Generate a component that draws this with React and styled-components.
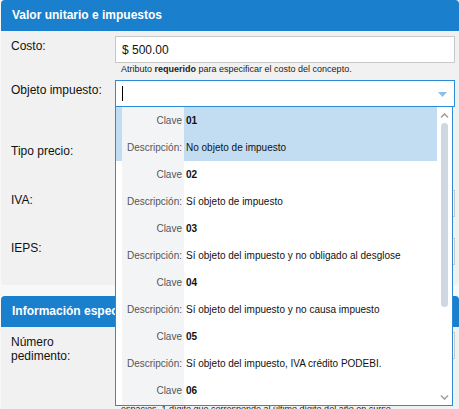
import React from 'react';
import styled, { createGlobalStyle } from 'styled-components';

const GlobalStyle = createGlobalStyle`
  html, body { margin: 0; padding: 0; background: #f8f8f8; }
  body {
    font-family: "Liberation Sans", Arial, sans-serif;
    width: 459px;
    height: 409px;
    overflow: hidden;
  }
  * { box-sizing: border-box; }
`;

const Page = styled.div`
  padding-left: 1px;
  display: flex;
  flex-direction: column;
  gap: 11px;
`;

const Panel = styled.section`
  background: #f1f1f1;
  border-radius: 4px;
`;

const PanelHeader = styled.h2`
  margin: 0;
  height: 31px;
  line-height: 31px;
  padding-left: 11px;
  background: #1a7fcc;
  color: #fff;
  font-size: 12px;
  font-weight: bold;
  border-radius: 4px 4px 0 0;
  white-space: nowrap;
`;

const PanelBody = styled.div`
  padding: 5px 4px ${(p) => p.$pb}px 10px;
  display: flex;
  flex-direction: column;
`;

const Field = styled.div`
  display: grid;
  grid-template-columns: 104px 1fr;
  margin-bottom: ${(p) => p.$mb || 0}px;
`;

const Label = styled.label`
  font-size: 12px;
  line-height: 14px;
  color: #111;
  padding: 3px 10px 0 0;
`;

const Control = styled.div`
  position: relative;
  min-width: 0;
`;

const Input = styled.div`
  height: 27px;
  border: 1px solid ${(p) => (p.$focused ? '#2a8bd8' : '#c8c8c8')};
  background: #fff;
  display: flex;
  align-items: center;
  padding: 0 6px;
  font-size: 12px;
  color: #111;
  position: relative;
`;

const Caret = styled.span`
  display: block;
  width: 1px;
  height: 15px;
  background: #000;
`;

const Arrow = styled.svg`
  position: absolute;
  right: 7px;
  top: 11px;
`;

const Help = styled.div`
  font-size: 9px;
  line-height: 11px;
  color: #1a1a1a;
  padding: 1px 0 1px 6px;
`;

const Radios = styled.div`
  display: flex;
  flex-direction: column;
  gap: 6px;
  padding: 3px 0 0 6px;
  height: 40px;
  font-size: 12px;
  color: #111;
`;

const RadioOpt = styled.span`
  display: flex;
  align-items: center;
  gap: 5px;
`;

const RadioDot = styled.span`
  width: 12px;
  height: 12px;
  border-radius: 50%;
  border: 1px solid #888;
  background: #fff;
`;

const Dropdown = styled.div`
  position: absolute;
  top: 26px;
  left: 0;
  width: 338px;
  height: 300px;
  background: #fff;
  border: 1px solid #2a8bd8;
  z-index: 10;
  display: flex;
  overflow: hidden;
`;

const List = styled.div`
  flex: 1;
  overflow: hidden;
`;

const Item = styled.div`
  display: grid;
  grid-template-columns: 62px 1fr;
  padding-left: 6px;
  background: ${(p) => (p.$selected ? '#c2ddf1' : '#fff')};
`;

const Key = styled.div`
  background: #f3f4f6;
  text-align: right;
  padding-right: 2px;
  font-size: 10px;
  color: #555;
  height: 27px;
  line-height: 27px;
  white-space: nowrap;
`;

const Val = styled.div`
  padding-left: 2px;
  font-size: 10px;
  font-weight: ${(p) => (p.$bold ? 'bold' : 'normal')};
  color: #111;
  height: 27px;
  line-height: 27px;
  white-space: nowrap;
`;

const ScrollTrack = styled.div`
  width: 15px;
  display: flex;
  flex-direction: column;
  align-items: center;
  padding: 5px 0 4px;
`;

const Thumb = styled.div`
  width: 7px;
  height: 184px;
  margin-top: 4px;
  border-radius: 4px;
  background: #cfd8e1;
`;

const Spacer = styled.div`
  flex: 1;
`;

const Chevron = ({ up }) => (
  <svg width="9" height="7" viewBox="0 0 9 7">
    <polyline
      points={up ? '1,5.5 4.5,2 8,5.5' : '1,1.5 4.5,5 8,1.5'}
      fill="none"
      stroke="#a3a3a3"
      strokeWidth="1.6"
    />
  </svg>
);

const options = [
  ['01', 'No objeto de impuesto'],
  ['02', 'Sí objeto de impuesto'],
  ['03', 'Sí objeto del impuesto y no obligado al desglose'],
  ['04', 'Sí objeto del impuesto y no causa impuesto'],
  ['05', 'Sí objeto del impuesto, IVA crédito PODEBI.'],
  ['06', 'Sí objeto del impuesto, no obligado al desglose, IVA crédito PODEBI.'],
];

export default function App() {
  return (
    <>
      <GlobalStyle />
      <Page>
        <Panel>
          <PanelHeader>Valor unitario e impuestos</PanelHeader>
          <PanelBody $pb={20}>
            <Field $mb={4}>
              <Label>Costo:</Label>
              <Control>
                <Input>$ 500.00</Input>
                <Help>
                  Atributo <b>requerido</b> para especificar el costo del concepto.
                </Help>
              </Control>
            </Field>
            <Field $mb={21}>
              <Label>Objeto impuesto:</Label>
              <Control>
                <Input $focused>
                  <Caret />
                  <Arrow width="9" height="5" viewBox="0 0 9 5">
                    <polygon points="0,0 9,0 4.5,5" fill="#8fbfe8" />
                  </Arrow>
                </Input>
                <Help>
                  Atributo <b>requerido</b> para expresar si la operación es objeto de impuesto.
                </Help>
                <Dropdown>
                  <List>
                    {options.map(([k, d], i) => (
                      <Item key={k} $selected={i === 0}>
                        <Key>Clave</Key>
                        <Val $bold>{k}</Val>
                        <Key>Descripción:</Key>
                        <Val>{d}</Val>
                      </Item>
                    ))}
                  </List>
                  <ScrollTrack>
                    <Chevron up />
                    <Thumb />
                    <Spacer />
                    <Chevron />
                  </ScrollTrack>
                </Dropdown>
              </Control>
            </Field>
            <Field $mb={9}>
              <Label>Tipo precio:</Label>
              <Radios>
                <RadioOpt><RadioDot />Precio unitario</RadioOpt>
                <RadioOpt><RadioDot />Precio con impuestos</RadioOpt>
              </Radios>
            </Field>
            <Field $mb={21}>
              <Label>IVA:</Label>
              <Control>
                <Input>16%</Input>
              </Control>
            </Field>
            <Field>
              <Label>IEPS:</Label>
              <Control>
                <Input>0%</Input>
              </Control>
            </Field>
          </PanelBody>
        </Panel>
        <Panel>
          <PanelHeader>Información específica</PanelHeader>
          <PanelBody $pb={20}>
            <Field>
              <Label>Número pedimento:</Label>
              <Control>
                <Input />
                <Help>
                  Atributo condicional para expresar el número del pedimento que ampara la
                  importación del bien que se expresa en el siguiente formato: últimos 2 dígitos
                  del año de validación seguidos por dos espacios, 2 dígitos de la aduana de
                  despacho seguidos por dos espacios, 4 dígitos del número de la patente seguidos
                  por dos espacios, 1 dígito que corresponde al último dígito del año en curso.
                </Help>
              </Control>
            </Field>
          </PanelBody>
        </Panel>
      </Page>
    </>
  );
}
